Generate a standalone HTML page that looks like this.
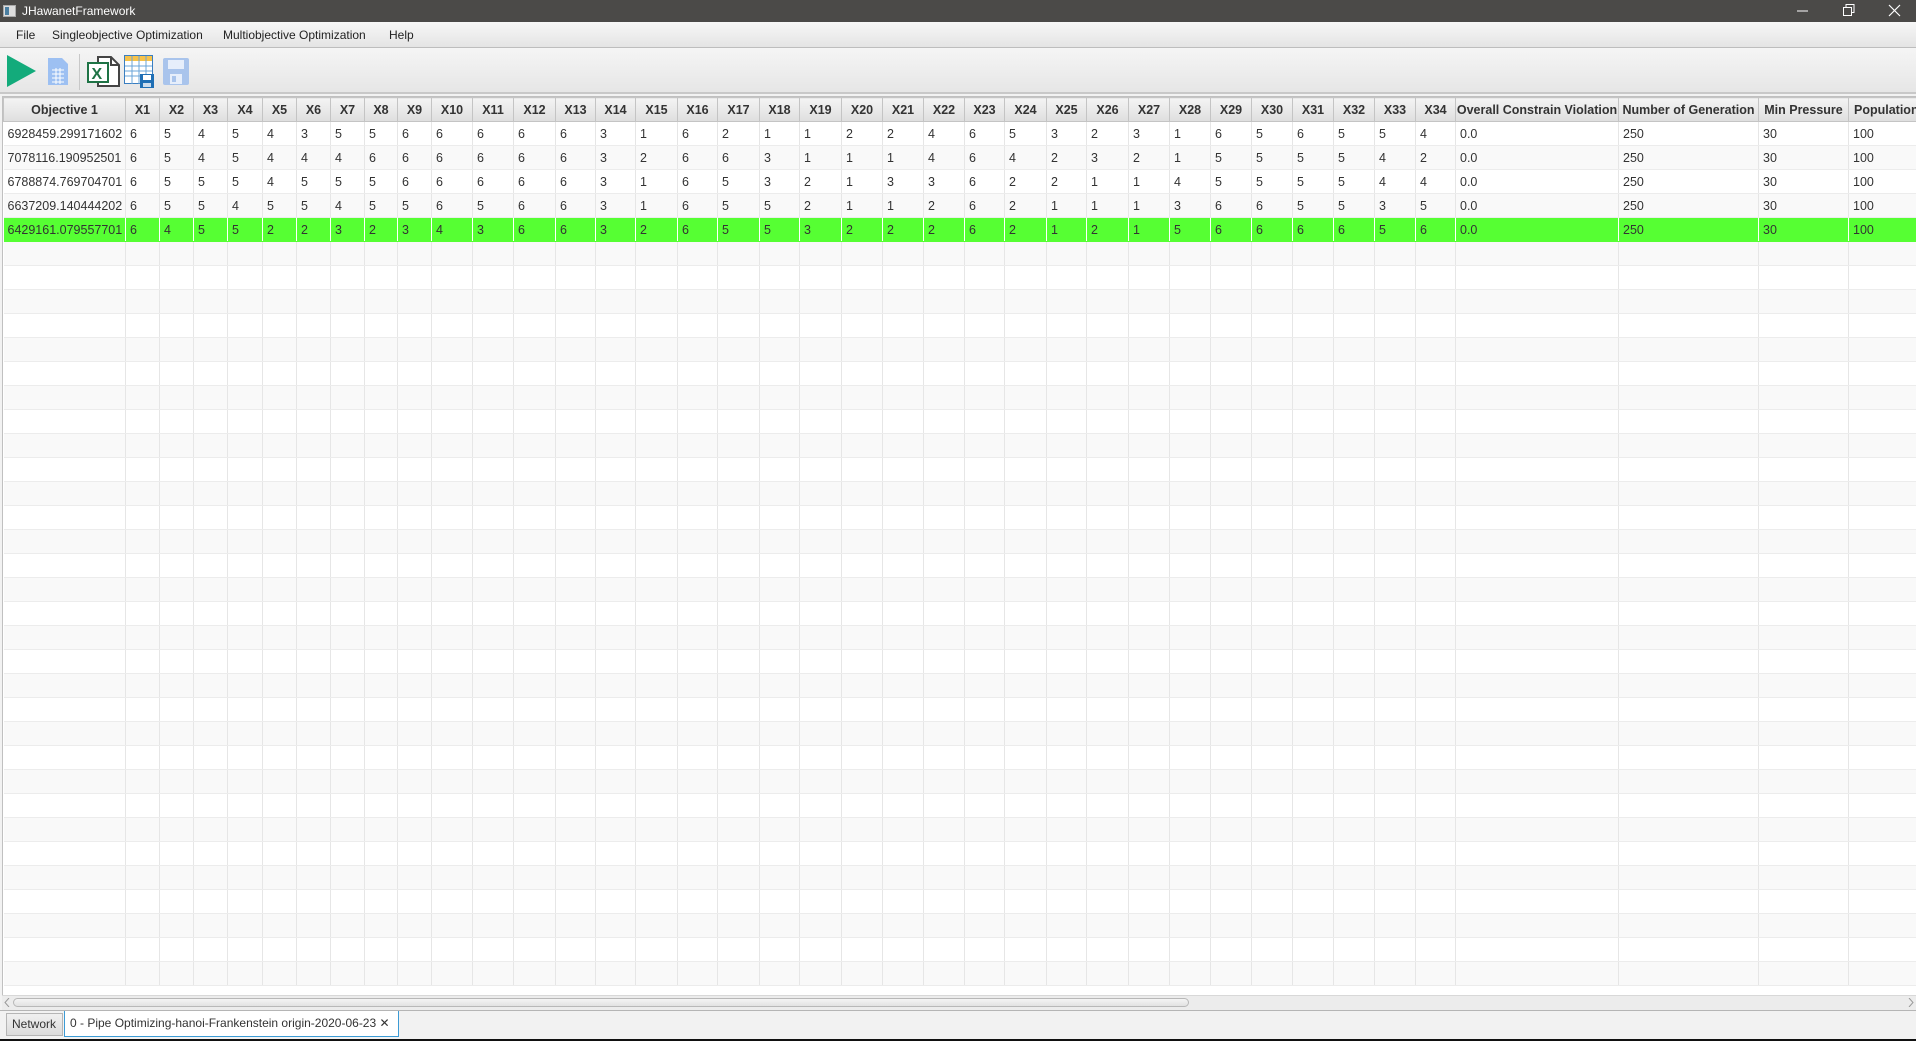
<!DOCTYPE html>
<html><head><meta charset="utf-8"><style>
*{margin:0;padding:0;box-sizing:border-box}
body{width:1916px;height:1041px;overflow:hidden;background:#f2f2f2;font-family:"Liberation Sans",sans-serif;position:relative}
#title{position:absolute;left:0;top:0;width:1916px;height:22px;background:#4b4a48;color:#fff;font-size:12px;line-height:22px}
#title .t{position:absolute;left:22px;top:0}
#menu{position:absolute;left:0;top:22px;width:1916px;height:26px;background:linear-gradient(#f7f7f7,#e4e4e4);border-bottom:1px solid #bdbdbd;font-size:12px;color:#222}
#menu span{position:absolute;top:6px}
#tool{position:absolute;left:0;top:48px;width:1916px;height:46px;background:linear-gradient(#f5f5f5,#e6e6e6);border-bottom:2px solid #c8c8c8}
#tw{position:absolute;left:2px;top:96px;width:1914px;height:900px;overflow:hidden;border:1px solid #c0c0c0;border-right:none;background:#fff}
table{border-collapse:collapse;table-layout:fixed;width:1955px;font-size:12.5px;color:#333}
th{height:24px;background:linear-gradient(#f4f4f4,#dedede);border:1px solid #c4c4c4;font-weight:bold;font-size:12.5px;color:#333;text-align:center;white-space:nowrap;overflow:hidden}
td{height:24px;border-right:1px solid #e6e6e6;border-bottom:1px solid #ececec;padding-left:4px;white-space:nowrap;overflow:hidden}
tr.o td{background:#fff}
tr.e td{background:#f9f9f9}
tr.g td{background:#56ff33;border-right-color:#fff;border-bottom-color:#56ff33}
#sb{position:absolute;left:2px;top:995px;width:1914px;height:15px;background:#ececec;border-top:1px solid #d8d8d8}
#thumb{position:absolute;left:11px;top:2px;width:1176px;height:9px;border:1px solid #b8b8b8;border-radius:5px;background:linear-gradient(#f4f4f4,#e2e2e2)}
#tabs{position:absolute;left:0;top:1010px;width:1916px;height:31px;border-top:1px solid #b5b5b5;background:#f2f2f2;font-size:12px;color:#333}
.tab{position:absolute;top:2px;height:23px;line-height:21px;padding:0 5px;border:1px solid #b5b5b5;background:linear-gradient(#f0f0f0,#dcdcdc)}
.tab.a{background:#fff;border-color:#3c9bd5;border-top:none}
#blk{position:absolute;left:0;top:1039px;width:1916px;height:2px;background:#111}
</style></head><body>
<div id="title">
<svg style="position:absolute;left:3px;top:5px" width="13" height="12"><rect x="0.5" y="0.5" width="12" height="11" fill="#ddd" stroke="#aaa"/><rect x="2" y="2" width="4" height="8" fill="#4a7ea0"/></svg>
<span class="t">JHawanetFramework</span>
<svg style="position:absolute;left:1797px;top:5px" width="12" height="12"><line x1="0" y1="6" x2="11" y2="6" stroke="#fff"/></svg>
<svg style="position:absolute;left:1843px;top:4px" width="12" height="12"><rect x="0.5" y="3.5" width="8" height="8" fill="none" stroke="#fff"/><path d="M3 3.5V0.5h8v8h-2.5" fill="none" stroke="#fff"/></svg>
<svg style="position:absolute;left:1888px;top:4px" width="13" height="13"><path d="M1 1L12 12M12 1L1 12" stroke="#fff" stroke-width="1.2"/></svg>
</div>
<div id="menu"><span style="left:16px">File</span><span style="left:52px">Singleobjective Optimization</span><span style="left:223px">Multiobjective Optimization</span><span style="left:389px">Help</span></div>
<div id="tool">
<svg style="position:absolute;left:7px;top:7px" width="30" height="33"><path d="M0 0L29 16L0 32Z" fill="#13ab7b"/></svg>
<svg style="position:absolute;left:48px;top:10px" width="21" height="28"><path d="M0 0h14l6 6v21H0Z" fill="#9dc0f2"/><g stroke="#fff" stroke-width="1"><path d="M4 12h12M4 16h12M4 20h12M4 24h12M8 10v16M12 10v16"/></g></svg>
<div style="position:absolute;left:79px;top:6px;width:1px;height:36px;background:#c8c8c8"></div>
<svg style="position:absolute;left:86px;top:7px" width="35" height="33"><path d="M12 2h13l8 8v21H12Z" fill="#fff" stroke="#444" stroke-width="2"/><path d="M25 2v8h8" fill="none" stroke="#444" stroke-width="2"/><rect x="2" y="8" width="20" height="19" fill="#fff" stroke="#1e7345" stroke-width="2"/><text x="5.5" y="24" font-family="Liberation Sans" font-weight="bold" font-size="16" fill="#1e7345">X</text></svg>
<svg style="position:absolute;left:124px;top:7px" width="31" height="34"><rect x="0.5" y="0.5" width="28" height="28" fill="#fff" stroke="#3a7ec0"/><rect x="1" y="1" width="27" height="5" fill="#f6c24a"/><g stroke="#6aa4d8"><path d="M1 11h27M1 16h27M1 21h27M8 1v28M15 1v28M22 1v28"/></g><rect x="16" y="19" width="14" height="14" fill="#1f6fb5"/><rect x="19" y="20" width="8" height="5" fill="#fff"/><rect x="19" y="28" width="8" height="4" fill="#cde"/></svg>
<svg style="position:absolute;left:163px;top:10px" width="27" height="28"><rect x="0" y="0" width="26" height="27" rx="2" fill="#a9c4ec"/><rect x="5" y="2" width="16" height="9" fill="#e6eefb"/><rect x="7" y="16" width="12" height="10" fill="#e6eefb"/><rect x="9" y="18" width="4" height="6" fill="#a9c4ec"/></svg>
</div>
<div id="tw"><table id="t">
<colgroup><col style="width:122px"><col style="width:34px"><col style="width:34px"><col style="width:34px"><col style="width:35px"><col style="width:34px"><col style="width:34px"><col style="width:34px"><col style="width:33px"><col style="width:34px"><col style="width:41px"><col style="width:41px"><col style="width:42px"><col style="width:40px"><col style="width:40px"><col style="width:42px"><col style="width:40px"><col style="width:42px"><col style="width:40px"><col style="width:42px"><col style="width:41px"><col style="width:41px"><col style="width:41px"><col style="width:40px"><col style="width:42px"><col style="width:40px"><col style="width:42px"><col style="width:41px"><col style="width:41px"><col style="width:41px"><col style="width:41px"><col style="width:41px"><col style="width:41px"><col style="width:41px"><col style="width:40px"><col style="width:163px"><col style="width:140px"><col style="width:90px"><col style="width:110px"></colgroup>
<tr><th>Objective 1</th><th>X1</th><th>X2</th><th>X3</th><th>X4</th><th>X5</th><th>X6</th><th>X7</th><th>X8</th><th>X9</th><th>X10</th><th>X11</th><th>X12</th><th>X13</th><th>X14</th><th>X15</th><th>X16</th><th>X17</th><th>X18</th><th>X19</th><th>X20</th><th>X21</th><th>X22</th><th>X23</th><th>X24</th><th>X25</th><th>X26</th><th>X27</th><th>X28</th><th>X29</th><th>X30</th><th>X31</th><th>X32</th><th>X33</th><th>X34</th><th>Overall Constrain Violation</th><th>Number of Generation</th><th>Min Pressure</th><th style="text-align:left;padding-left:5px">Population</th></tr>
</table></div>
<div id="sb"><svg style="position:absolute;left:2px;top:2px" width="6" height="9"><path d="M5 0L1 4.5L5 9" fill="none" stroke="#999"/></svg><div id="thumb"></div><svg style="position:absolute;right:2px;top:2px" width="6" height="9"><path d="M1 0L5 4.5L1 9" fill="none" stroke="#999"/></svg></div>
<div id="tabs"><div class="tab" style="left:6px;width:57px">Network</div><div class="tab a" style="left:64px;width:335px;top:0;height:26px;line-height:25px">0 - Pipe Optimizing-hanoi-Frankenstein origin-2020-06-23 ✕</div></div>
<div id="blk"></div>
<script>
var d=[["6928459.299171602","6 5 4 5 4 3 5 5 6 6 6 6 6 3 1 6 2 1 1 2 2 4 6 5 3 2 3 1 6 5 6 5 5 4"],
["7078116.190952501","6 5 4 5 4 4 4 6 6 6 6 6 6 3 2 6 6 3 1 1 1 4 6 4 2 3 2 1 5 5 5 5 4 2"],
["6788874.769704701","6 5 5 5 4 5 5 5 6 6 6 6 6 3 1 6 5 3 2 1 3 3 6 2 2 1 1 4 5 5 5 5 4 4"],
["6637209.140444202","6 5 5 4 5 5 4 5 5 6 5 6 6 3 1 6 5 5 2 1 1 2 6 2 1 1 1 3 6 6 5 5 3 5"],
["6429161.079557701","6 4 5 5 2 2 3 2 3 4 3 6 6 3 2 6 5 5 3 2 2 2 6 2 1 2 1 5 6 6 6 6 5 6"]];
var h="";
for(var i=0;i<36;i++){var c=i==4?"g":(i%2?"e":"o");h+='<tr class="'+c+'">';
if(i<5){h+="<td>"+d[i][0]+"</td>";d[i][1].split(" ").forEach(function(v){h+="<td>"+v+"</td>"});h+="<td>0.0</td><td>250</td><td>30</td><td>100</td>";}
else{for(var j=0;j<39;j++)h+="<td></td>";}
h+="</tr>";}
document.getElementById("t").insertAdjacentHTML("beforeend",h);
</script>
</body></html>
